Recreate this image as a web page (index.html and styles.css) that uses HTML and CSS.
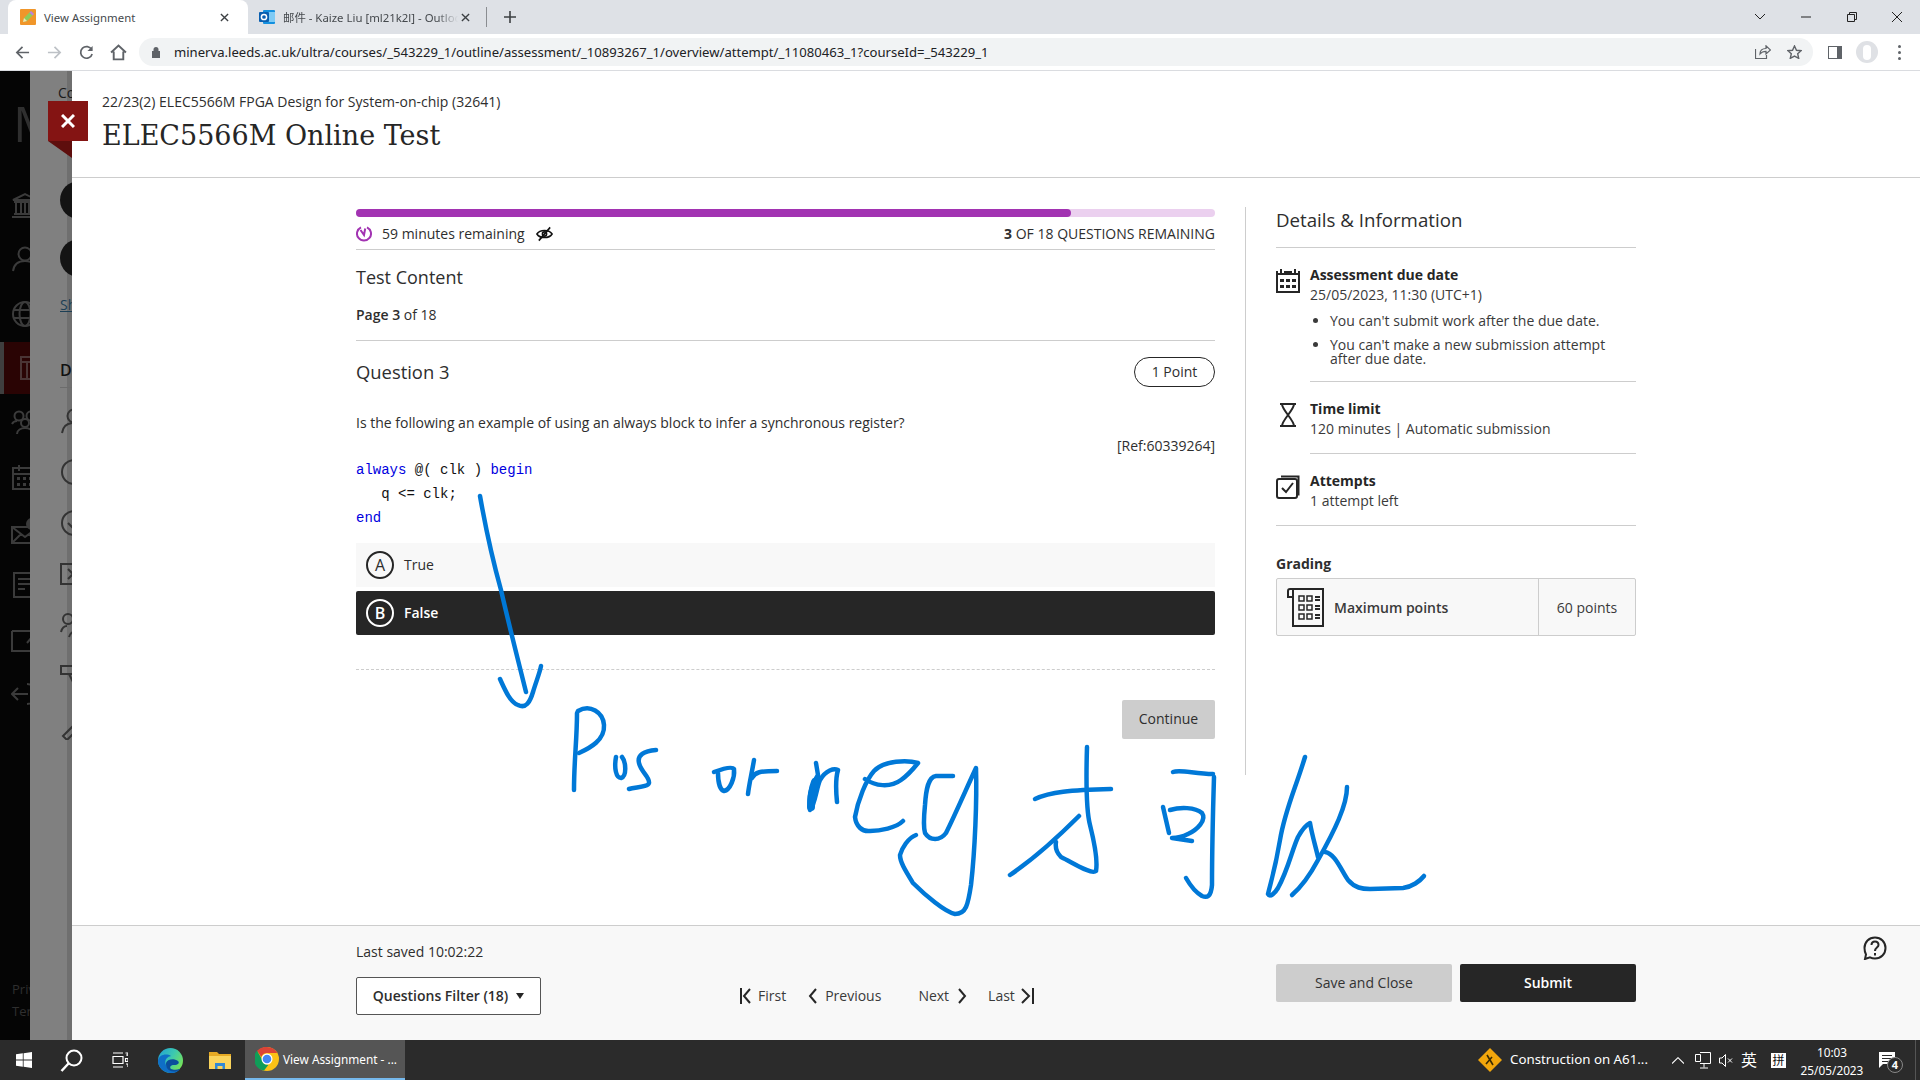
FILE: index.html
```html
<!DOCTYPE html>
<html lang="en">
<head>
<meta charset="utf-8">
<title>View Assignment</title>
<link rel="stylesheet" href="styles.css">
</head>
<body>
<header class="tabstrip">
  <div class="tab tab-active">
    <svg class="fav" viewBox="0 0 16 16"><rect width="16" height="16" rx="1" fill="#f0962a"/><path d="M3 13l1-4 7-7 3 3-7 7z" fill="#8ecb5a"/><path d="M11 2l3 3-1.500 1.500-3-3z" fill="#c07be0"/><path d="M3 13l1-4 3 3z" fill="#f7e3b0"/></svg>
    <span class="tab-title">View Assignment</span>
    <svg class="tab-x" viewBox="0 0 10 10"><path d="M1 1l8 8M9 1l-8 8"/></svg>
  </div>
  <div class="tab tab-other">
    <svg class="fav" viewBox="0 0 16 16"><rect x="4" y="1" width="12" height="14" rx="1" fill="#1490df"/><rect x="9" y="3" width="7" height="10" fill="#7fcbf5"/><rect y="3" width="10" height="10" rx="1" fill="#0a5fb0"/><circle cx="5" cy="8" r="2.600" fill="none" stroke="#fff" stroke-width="1.500"/></svg>
    <span class="tab-title tab-title-fade">邮件 - Kaize Liu [ml21k2l] - Outlook</span>
    <svg class="tab-x" viewBox="0 0 10 10"><path d="M1 1l8 8M9 1l-8 8"/></svg>
  </div>
  <span class="tab-sep"></span>
  <svg class="new-tab" viewBox="0 0 12 12"><path d="M6 0v12M0 6h12"/></svg>
  <div class="win-controls">
    <svg class="win-icon win-chev" viewBox="0 0 10 6"><path d="M0 0l5 5 5-5"/></svg>
    <svg class="win-icon win-min" viewBox="0 0 10 2"><path d="M0 1h10"/></svg>
    <svg class="win-icon win-max" viewBox="0 0 10 10"><path d="M.5 2.500h7v7h-7zM2.500 2.500v-2h7v7h-2"/></svg>
    <svg class="win-icon win-close" viewBox="0 0 10 10"><path d="M0 0l10 10M10 0l-10 10"/></svg>
  </div>
</header>

<nav class="toolbar">
  <svg class="tb-icon tb-back" viewBox="0 0 16 16"><path d="M15 8H2M8 2L2 8l6 6"/></svg>
  <svg class="tb-icon tb-fwd" viewBox="0 0 16 16"><path d="M1 8h13M8 2l6 6-6 6"/></svg>
  <svg class="tb-icon tb-reload" viewBox="0 0 16 16"><path d="M13.500 5A6.200 6.200 0 1 0 14 9.500"/><path class="tb-fill" d="M14.500 1v5.500H9z"/></svg>
  <svg class="tb-icon tb-home" viewBox="0 0 16 16"><path d="M1 8l7-6.500L15 8M3.500 7v7.500h9V7"/></svg>
  <div class="omnibox">
    <svg class="lock" viewBox="0 0 10 12"><path d="M2.500 5V3.500a2.500 2.500 0 0 1 5 0V5h1.500v7H1V5z" fill="#5f6368"/></svg>
    <span class="url">minerva.leeds.ac.uk/ultra/courses/_543229_1/outline/assessment/_10893267_1/overview/attempt/_11080463_1?courseId=_543229_1</span>
    <svg class="omni-icon omni-share" viewBox="0 0 16 14"><path d="M.5 4v9.500h11V10M5 9c0-4 3-5.500 6-5.500V.8L15.500 5 11 9V6.300C8.500 6.300 6.500 7 5 9z"/></svg>
    <svg class="omni-icon omni-star" viewBox="0 0 16 15"><path d="M8 1l2.100 4.600 5 .5-3.700 3.300 1.100 4.900L8 11.800l-4.500 2.500 1.100-4.900L.9 6.100l5-.5z"/></svg>
  </div>
  <span class="side-panel-btn"><span></span></span>
  <span class="avatar"><span></span></span>
  <span class="kebab"><i></i><i></i><i></i></span>
</nav>

<div class="app">
  <aside class="rail">
    <div class="rail-logo">M</div>
    <svg class="rail-icon" viewBox="0 0 28 26"><path d="M2 8l12-6 12 6zM3 10h22M5 11v10M10 11v10M14 11v10M18 11v10M23 11v10M3 22h22M1 25h26"/></svg>
    <svg class="rail-icon" viewBox="0 0 28 26"><circle cx="14" cy="8" r="6.500"/><path d="M2 25c1-7 6-10 12-10s11 3 12 10"/></svg>
    <svg class="rail-icon" viewBox="0 0 28 26"><circle cx="14" cy="13" r="12"/><ellipse cx="14" cy="13" rx="5.500" ry="12"/><path d="M2 9h24M2 17h24"/></svg>
    <div class="rail-active"><svg class="rail-icon" viewBox="0 0 28 26"><path d="M3 2h24v22H3zM3 7h24M9 7v17M13 11h9v7h-9z"/></svg></div>
    <svg class="rail-icon" viewBox="0 0 28 26"><circle cx="8" cy="7" r="4.500"/><circle cx="20" cy="7" r="4.500"/><circle cx="14" cy="14" r="4"/><path d="M1 15c1-2 3-3 5-3M27 15c-1-2-3-3-5-3M6 25c0-4 4-6 8-6s8 2 8 6"/></svg>
    <svg class="rail-icon" viewBox="0 0 28 26"><path d="M2 4h24v21H2zM2 10h24M8 1v6M20 1v6"/><path class="rail-dots" d="M6 13h3v3H6zM12 13h3v3h-3zM18 13h3v3h-3zM6 19h3v3H6zM12 19h3v3h-3zM18 19h3v3h-3z"/></svg>
    <svg class="rail-icon" viewBox="0 0 28 26"><path d="M1 9h26v16H1zM1 9l13 10L27 9M1 25l9-9M27 25l-9-9"/><circle class="rail-dots" cx="21" cy="6" r="6"/></svg>
    <svg class="rail-icon" viewBox="0 0 28 26"><path d="M3 1h20v24H3zM7 7h12M7 12h12M7 17h7"/></svg>
    <svg class="rail-icon" viewBox="0 0 28 26"><path d="M1 4h22M1 4v20h24V12M16 16l10-12"/></svg>
    <svg class="rail-icon" viewBox="0 0 28 26"><path d="M16 3a10 10 0 0 1 0 20M1 13h16M7 7l-6 6 6 6"/></svg>
    <div class="rail-legal"><span>Privacy</span><span>Terms</span></div>
  </aside>

  <div class="backdrop">
    <div class="bd-inner">
      <div class="bd-course">Course</div>
      <div class="bd-rule"></div>
      <div class="bd-avatar"></div>
      <div class="bd-avatar"></div>
      <div class="bd-link">Show</div>
      <div class="bd-head">Details</div>
      <div class="bd-rule2"></div>
      <svg class="bd-icon" viewBox="0 0 28 26"><circle cx="14" cy="8" r="6.500"/><path d="M2 25c1-7 6-10 12-10s11 3 12 10"/></svg>
      <svg class="bd-icon" viewBox="0 0 28 26"><circle cx="14" cy="13" r="12"/><path d="M14 11v8M14 6v2"/></svg>
      <svg class="bd-icon" viewBox="0 0 28 26"><circle cx="14" cy="13" r="12"/><path d="M8 13l5 5 7-8"/></svg>
      <svg class="bd-icon" viewBox="0 0 28 26"><path d="M1 3h26v20H1zM8 8l5 5-5 5M15 8l5 5-5 5"/></svg>
      <svg class="bd-icon" viewBox="0 0 28 26"><circle cx="8" cy="7" r="5"/><circle cx="18" cy="14" r="4"/><path d="M1 20c1-4 3-6 6-6M9 25c1-4 5-6 9-6"/></svg>
      <svg class="bd-icon" viewBox="0 0 28 26"><path d="M1 3h18v8H1zM9 11l6 12 4-12"/></svg>
      <svg class="bd-icon" viewBox="0 0 28 26"><path d="M3 22l18-18 4 4-18 18z"/></svg>
    </div>
  </div>

  <main class="panel">
    <section class="panel-head">
      <p class="crumb">22/23(2) ELEC5566M FPGA Design for System-on-chip (32641)</p>
      <h1 class="page-title">ELEC5566M Online Test</h1>
    </section>

    <section class="panel-body">
      <div class="col-main">
        <div class="progress"><div class="progress-fill"></div></div>
        <div class="timer-row">
          <svg class="timer-icon" viewBox="0 0 16 18"><path d="M5 2.800A7 7 0 1 0 11 2.800"/><path d="M4.500 5.500L8 10.500 9.200 4"/></svg>
          <span class="timer-text">59 minutes remaining</span>
          <svg class="eye-icon" viewBox="0 0 18 16"><path d="M1 8c3-5 13-5 16 0-3 5-13 5-16 0z"/><circle cx="9" cy="8" r="2.200"/><path d="M3 15L15 1"/></svg>
          <span class="remain"><b>3</b> OF 18 QUESTIONS REMAINING</span>
        </div>
        <h2 class="test-content">Test Content</h2>
        <p class="page-no"><b>Page 3</b> of 18</p>
        <div class="q-head">
          <h3 class="q-title">Question 3</h3>
          <span class="pill">1 Point</span>
        </div>
        <p class="q-text">Is the following an example of using an always block to infer a synchronous register?</p>
        <p class="q-ref">[Ref:60339264]</p>
        <pre class="code"><span class="kw">always</span> @( clk ) <span class="kw">begin</span>
   q &lt;= clk;
<span class="kw">end</span></pre>
        <div class="option"><span class="opt-badge">A</span><span>True</span></div>
        <div class="option option-on"><span class="opt-badge">B</span><span>False</span></div>
        <div class="dash"></div>
        <div class="continue-row"><span class="btn-continue">Continue</span></div>
      </div>

      <aside class="col-side">
        <h2 class="side-title">Details &amp; Information</h2>
        <div class="info">
          <svg class="info-icon" viewBox="0 0 24 24"><path d="M1 5h22v18H1zM1 5V2M5 5V0M19 5V0M23 5V2M8 3h8"/><path class="solid" d="M4 10h4v3H4zM10 10h4v3h-4zM16 10h4v3h-4zM4 16h4v3H4zM10 16h4v3h-4zM16 16h4v3h-4z"/></svg>
          <div class="info-text info-line info-first">
            <b>Assessment due date</b>
            <span>25/05/2023, 11:30 (UTC+1)</span>
            <ul class="notes">
              <li>You can't submit work after the due date.</li>
              <li>You can't make a new submission attempt after due date.</li>
            </ul>
          </div>
        </div>
        <div class="info">
          <svg class="info-icon" viewBox="0 0 24 24"><path d="M4 1h16M4 23h16M6 1c0 6 12 16 12 22M18 1C18 7 6 17 6 23"/></svg>
          <div class="info-text info-line">
            <b>Time limit</b>
            <span>120 minutes | Automatic submission</span>
          </div>
        </div>
        <div class="info info-line">
          <svg class="info-icon" viewBox="0 0 24 24"><path d="M5 1.500h17.500v19"/><rect x="1" y="4" width="20" height="19" rx="2"/><path d="M6 13l4 4 7-9"/></svg>
          <div class="info-text">
            <b>Attempts</b>
            <span>1 attempt left</span>
          </div>
        </div>
        <h4 class="grading">Grading</h4>
        <div class="grade-box">
          <svg class="grade-icon" viewBox="0 0 38 40"><path d="M6 39V2h30v37zM6 2H3a2 2 0 0 0-2 2v6h5"/><path class="solid-o" d="M12 9h5v5h-5zM20 9h5v5h-5zM12 18h5v5h-5zM20 18h5v5h-5zM12 27h5v5h-5zM20 27h5v5h-5z"/><path d="M28 10h5M28 13h5M28 19h5M28 22h5M28 28h5M28 31h5"/></svg>
          <span class="grade-label">Maximum points</span>
          <span class="grade-value">60 points</span>
        </div>
      </aside>
    </section>

    <footer class="panel-foot">
      <div class="foot-left">
        <p class="saved">Last saved 10:02:22</p>
        <span class="filter">Questions Filter (18) <i class="caret"></i></span>
      </div>
      <div class="pager">
        <svg class="pg-icon pg-first" viewBox="0 0 12 16"><path d="M1 0v16M10 1L4 8l6 7"/></svg><span class="pg-text pg-firsttext">First</span>
        <svg class="pg-icon pg-prev" viewBox="0 0 10 16"><path d="M8 1L2 8l6 7"/></svg><span class="pg-text">Previous</span>
        <span class="pg-text pg-next">Next</span><svg class="pg-icon pg-nexti" viewBox="0 0 10 16"><path d="M2 1l6 7-6 7"/></svg>
        <span class="pg-text pg-last">Last</span><svg class="pg-icon pg-lasti" viewBox="0 0 14 16"><path d="M2 1l7 7-7 7M13 0v16"/></svg>
      </div>
      <div class="foot-actions">
        <span class="btn btn-save">Save and Close</span>
        <span class="btn btn-submit">Submit</span>
      </div>
      <svg class="help" viewBox="0 0 24 24"><path d="M12 1.500c6 0 10.500 4.500 10.500 10.500S18 22.500 12 22.500c-2 0-3.500-.4-5-1.200L2 23l1-4.500C2 16.500 1.500 14 1.500 12 1.500 6 6 1.500 12 1.500z"/><path d="M8.500 9c0-2 1.500-3.500 3.500-3.500s3.500 1.500 3.500 3.500c0 2.500-3.500 2.800-3.500 6"/><path d="M12 17v2.500"/></svg>
    </footer>
  </main>
</div>

<footer class="taskbar">
  <svg class="tk-win" viewBox="0 0 16 16"><path d="M0 2.300l6.800-1v6.300H0zM7.600 1.200L16 0v7.600H7.600zM0 8.400h6.800v6.300l-6.800-1zM7.600 8.400H16V16l-8.400-1.200z" fill="#fff"/></svg>
  <svg class="tk-search" viewBox="0 0 23 23"><circle cx="14" cy="9" r="7.500" fill="none" stroke="#fff" stroke-width="2"/><path d="M8.500 14.500L1.500 22" stroke="#fff" stroke-width="2.500" fill="none"/></svg>
  <svg class="tk-view" viewBox="0 0 16 16"><path d="M1 1h10M1 15h10M1 4.500h10v7H1zM14 3h2v0M13.500 1h2.500v3M13.500 6.500h2.500v3h-2.500zM14 12h2v3" fill="none" stroke="#fff" stroke-width="1.200"/></svg>
  <svg class="tk-edge" viewBox="0 0 25 25"><defs><linearGradient id="eg" x1="0" y1="0" x2="1" y2=".6"><stop offset="0" stop-color="#1f9fd8"/><stop offset=".55" stop-color="#3cc8b0"/><stop offset="1" stop-color="#74e25c"/></linearGradient></defs><circle cx="12.500" cy="12.500" r="12.500" fill="url(#eg)"/><path d="M0 12.500C1 7 8 5 13 8c-5 1-7 5-5 9 2 4.500 8 7 14 4-4 5-10 5-14 3C3 22 0 18 0 12.500z" fill="#0f6fc6"/><path d="M8 15c1-4 8-5 12-2 2 2 0 4-4 4-3 0-5 2-3 4 2 1 6 1 9 0-4 4-11 3-13-1-1-2-1-3-1-5z" fill="#0b4f9c"/></svg>
  <svg class="tk-files" viewBox="0 0 22 18"><path d="M0 1h8l2 2h12v15H0z" fill="#e5a924"/><path d="M0 5h22v13H0z" fill="#f9d35c"/><path d="M6 12h10v6h-2.500v-3h-5v3H6z" fill="#2f88d5"/></svg>
  <div class="tk-app">
    <svg class="tk-chrome" viewBox="0 0 24 24"><circle cx="12" cy="12" r="12" fill="#fbc116"/><path d="M12 0a12 12 0 0 1 10.400 6H12a6 6 0 0 0-5.700 4L2 3.800A12 12 0 0 1 12 0z" fill="#db4437"/><path d="M2 3.800l4.800 8.300a6 6 0 0 0 6.700 5.700L9 23.600A12 12 0 0 1 2 3.800z" fill="#0f9d58"/><circle cx="12" cy="12" r="5.500" fill="#fff"/><circle cx="12" cy="12" r="4.300" fill="#4285f4"/></svg>
    <span class="tk-app-label">View Assignment - ...</span>
  </div>
  <div class="tray">
    <svg class="tray-sign" viewBox="0 0 24 24"><path d="M12 0l12 12-12 12L0 12z" fill="#f2a60c"/><path d="M9 7l6 10M14 9l-6 7" stroke="#3a2a00" stroke-width="1.600"/></svg>
    <span class="tray-news">Construction on A61...</span>
    <svg class="tray-chev" viewBox="0 0 12 7"><path d="M0 6.500L6 .7l6 5.800" fill="none" stroke="#fff" stroke-width="1.100"/></svg>
    <svg class="tray-net" viewBox="0 0 16 17"><path d="M5 .5h10.500v11H5M.5 2.500h5v7h-5zM9 11.500v4M5 16h8" fill="none" stroke="#fff" stroke-width="1"/></svg>
    <svg class="tray-vol" viewBox="0 0 14 13"><path d="M.5 4h2.500L6.500.5v12L3 9H.5zM9 4.500l4 4M13 4.500l-4 4" fill="none" stroke="#fff" stroke-width="1"/></svg>
    <span class="tray-ime">英</span>
    <span class="tray-pin">拼</span>
    <div class="clock"><span>10:03</span><span>25/05/2023</span></div>
    <div class="notify">
      <svg class="notify-ico" viewBox="0 0 16 16"><path d="M0 0h16v12H4l-4 4z" fill="#fff"/><path d="M3 3.500h10M3 6.500h10M3 9.500h6" stroke="#2b2b2b"/></svg>
      <span class="notify-badge">4</span>
    </div>
    <span class="show-desktop"></span>
  </div>
</footer>

<div class="close-ribbon">
  <svg class="close-x" viewBox="0 0 14 14"><path d="M1 1l12 12M13 1L1 13"/></svg>
</div>

<svg class="ink" viewBox="0 0 1920 1080">
  <path d="M480 496C486 530 494 565 501 590C509 625 518 660 526 692"/>
  <path d="M500 679C505 690 510 702 518 705C526 709 530 702 533 692C536 682 540 672 541 666"/>
  <path d="M574 790C574 760 577 740 577 713"/>
  <path d="M578 711C590 704 603 712 604 725C605 740 590 748 579 753"/>
  <path d="M616 757C614 768 616 778 621 778C627 776 626 762 622 757"/>
  <path d="M656 750C644 751 637 755 639 763C641 772 650 777 649 783C648 787 636 787 629 789"/>
  <path d="M714 772C722 769 732 766 734 769C735 778 730 790 724 791C720 790 718 782 718 773"/>
  <path d="M754 760C752 772 749 785 748 794"/>
  <path d="M752 778C755 772 760 771 777 771"/>
  <path d="M816 763L818 775C812 785 808 795 810 810C815 805 816 790 820 780C826 770 834 768 838 770C835 780 836 792 837 802"/>
  <path class="ink-thick" d="M815 782C812 790 811 800 811 807"/>
  <path d="M865 779C875 786 890 788 901 780C908 775 914 768 918 763C908 760 884 760 874 771C866 780 858 800 855 817C856 826 862 832 870 831C880 831 896 828 903 821"/>
  <path d="M953 776L936 776C928 777 926 790 925 805C924 815 923 826 925 833C930 841 940 841 946 833C955 815 968 785 976 768C977 800 975 850 971 885C968 905 966 914 955 914C945 912 925 895 913 883C905 870 900 862 900 855C902 848 908 838 916 835"/>
  <path d="M1035 799C1050 792 1070 790 1111 789"/>
  <path d="M1087 747C1086 780 1086 810 1090 825C1095 845 1098 860 1096 871C1092 875 1075 864 1061 857C1056 852 1055 848 1056 842"/>
  <path d="M1079 816C1060 835 1035 858 1010 875"/>
  <path d="M1173 772C1180 769 1195 774 1213 774"/>
  <path d="M1214 777C1213 810 1212 860 1212 885C1211 897 1207 898 1202 896C1195 892 1190 885 1186 878"/>
  <path d="M1163 807L1169 833"/>
  <path d="M1170 810C1180 807 1195 807 1202 813C1207 820 1197 830 1188 834C1182 837 1176 838 1172 838L1192 841"/>
  <path d="M1305 757C1295 790 1285 810 1280 840C1275 870 1270 885 1268 894C1270 898 1275 893 1278 888C1288 870 1292 850 1298 837C1303 828 1308 824 1310 823C1312 835 1316 848 1318 857"/>
  <path d="M1347 787C1347 805 1335 830 1318 860C1310 875 1300 888 1292 895"/>
  <path d="M1325 852C1335 853 1342 872 1348 880C1355 888 1362 889 1370 889L1403 888C1412 887 1420 881 1424 876"/>
</svg>
</body>
</html>
```
FILE: styles.css
```css
* { box-sizing: border-box; }
html, body { margin: 0; padding: 0; }
body {
  position: relative;
  width: 1920px;
  height: 1080px;
  overflow: hidden;
  display: flex;
  flex-direction: column;
  font-family: "Open Sans", "Noto Sans CJK SC", sans-serif;
  font-size: 14px;
  color: #2e2e2e;
  background: #fff;
}
p, h1, h2, h3, h4, ul, pre { margin: 0; padding: 0; font-weight: 400; }
svg { display: block; flex: none; }

/* browser chrome */
.tabstrip { height: 34px; flex: none; background: #dee1e6; display: flex; align-items: flex-end; padding-left: 8px; font-family: "Noto Sans", "Noto Sans CJK SC", sans-serif; }
.tab { height: 34px; display: flex; align-items: center; position: relative; font-size: 11.400px; color: #45494d; }
.tab-active { width: 240px; background: #fff; border-radius: 8px 8px 0 0; padding-left: 12px; }
.tab-other { width: 238px; padding-left: 11px; }
.fav { width: 16px; height: 16px; margin-right: 8px; }
.tab-title { white-space: nowrap; }
.tab-active .tab-title { width: 176px; }
.tab-title-fade { width: 175px; overflow: hidden; -webkit-mask-image: linear-gradient(90deg, #000 88%, transparent); mask-image: linear-gradient(90deg, #000 88%, transparent); }
.tab-x { width: 9px; height: 9px; fill: none; stroke: #3c4043; stroke-width: 1.500; }
.tab-other .tab-x { margin-left: 3px; }
.tab-sep { width: 1px; height: 20px; background: #8a8d91; align-self: center; }
.new-tab { width: 12px; height: 12px; margin: 0 0 11px 17px; fill: none; stroke: #3c4043; stroke-width: 1.600; }
.win-controls { margin-left: auto; height: 34px; display: flex; align-items: center; padding-right: 18px; }
.win-icon { fill: none; stroke: #222; stroke-width: 1; }
.win-chev { width: 10px; height: 6px; margin-right: 36px; }
.win-min { width: 10px; height: 2px; margin-right: 36px; }
.win-max { width: 10px; height: 10px; margin-right: 35px; }
.win-close { width: 10px; height: 10px; }

.toolbar { height: 37px; flex: none; background: #fff; border-bottom: 1px solid #dadce0; display: flex; align-items: center; padding: 0 0 0 15px; }
.tb-icon { width: 15px; height: 15px; fill: none; stroke: #5f6368; stroke-width: 1.800; }
.tb-fwd { margin-left: 17px; stroke: #bdc1c6; }
.tb-reload { margin-left: 17px; }
.tb-home { margin-left: 16px; width: 17px; height: 17px; }
.tb-fill { fill: #5f6368; stroke: none; }
.omnibox { width: 1674px; height: 28px; margin-left: 12px; border-radius: 14px; background: #f1f3f4; display: flex; align-items: center; padding-left: 12px; }
.lock { width: 10px; height: 12px; }
.url { margin-left: 13px; font-size: 13.100px; color: #202124; white-space: nowrap; font-family: "Noto Sans", sans-serif; }
.omni-icon { fill: none; stroke: #5f6368; stroke-width: 1.200; }
.omni-share { width: 16px; height: 14px; margin-left: auto; }
.omni-star { width: 15px; height: 14px; margin: 0 11px 0 16px; stroke-width: 1.500; }
.side-panel-btn { width: 14px; height: 13px; margin-left: 15px; background: #5f6368; padding: 1px 5px 1px 1px; display: block; flex: none; }
.side-panel-btn span { display: block; height: 100%; background: #fff; }
.avatar { width: 22px; height: 22px; margin-left: 14px; border-radius: 50%; background: #dfe1e5; display: flex; justify-content: center; align-items: center; flex: none; }
.avatar span { width: 8px; height: 15px; border-radius: 5px; background: #fff; }
.kebab { margin-left: 20px; display: flex; flex-direction: column; gap: 3px; }
.kebab i { width: 3px; height: 3px; border-radius: 50%; background: #5f6368; display: block; }

/* page behind the dialog */
.app { flex: 1; display: flex; min-height: 0; }
.rail { width: 30px; flex: none; background: #050505; overflow: hidden; display: flex; flex-direction: column; position: relative; }
.rail-logo { height: 107px; width: 60px; padding: 22px 0 0 13px; font-family: "Open Sans", sans-serif; font-size: 50px; line-height: 60px; color: #2f2f2f; }
.rail-icon { width: 28px; height: 26px; margin: 14px 0 14.400px 11px; fill: none; stroke: #3b3b3b; stroke-width: 2; }
.rail-dots { fill: #3b3b3b; stroke: none; }
.rail-active { height: 52px; background: #2a0404; border-left: 4px solid #3f3f3f; width: 30px; margin: 1px 0; overflow: hidden; }
.rail-active .rail-icon { margin: 13px 0 0 14px; stroke: #4a3535; }
.rail-legal { margin-top: auto; padding: 0 0 19px 12px; display: flex; flex-direction: column; gap: 2px; font-size: 13px; color: #2f2f2f; line-height: 20px; }

.backdrop { width: 42px; flex: none; background: linear-gradient(90deg, #808080 37px, #6f6f6f 37px); overflow: hidden; }
.bd-inner { width: 120px; padding: 12px 0 0 30px; display: flex; flex-direction: column; color: #111; }
.bd-course { height: 20px; margin-left: -2px; font-size: 14px; line-height: 20px; color: #1a1a1a; }
.bd-rule { height: 1px; margin: 14px 0 0 -10px; background: #6c6c6c; }
.bd-avatar { width: 38px; height: 38px; border-radius: 50%; background: #141414; flex: none; }
.bd-rule + .bd-avatar { margin-top: 63px; }
.bd-avatar + .bd-avatar { margin-top: 20px; }
.bd-link { margin-top: 18px; font-size: 14px; line-height: 20px; color: #1c3f55; text-decoration: underline; }
.bd-head { margin-top: 45px; font-size: 16px; font-weight: 600; line-height: 20px; color: #111; }
.bd-rule2 { height: 1px; margin: 7px 0 0; background: #6c6c6c; }
.bd-icon { width: 28px; height: 26px; margin-bottom: 25px; fill: none; stroke: #333; stroke-width: 2; }
.bd-rule2 + .bd-icon { margin-top: 20px; }

/* dialog panel */
.panel { flex: 1; min-width: 0; display: flex; flex-direction: column; background: #fff; }
.panel-head { height: 107px; flex: none; border-bottom: 1px solid #cdcdcd; padding: 21px 0 0 30px; }
.crumb { font-size: 14px; line-height: 20px; }
.page-title { margin-top: 5px; font-family: "DejaVu Serif", serif; font-size: 27px; line-height: 38px; color: #262626; }

.panel-body { flex: 1; min-height: 0; display: flex; align-items: flex-start; padding: 29px 0 0 284px; }
.col-main { width: 859px; padding-top: 2px; flex: none; }
.progress { height: 8px; border-radius: 4px; background: #ebd0ef; }
.progress-fill { width: 715px; height: 8px; border-radius: 4px; background: #a233b2; }
.timer-row { height: 33px; border-bottom: 1px solid #cdcdcd; display: flex; align-items: center; padding-top: 1px; }
.timer-icon { width: 16px; height: 19px; fill: none; stroke: #a233b2; stroke-width: 2; }
.timer-text { margin-left: 10px; }
.eye-icon { width: 17px; height: 16px; margin-left: 11px; fill: none; stroke: #111; stroke-width: 1.700; }
.remain { margin-left: auto; }
.remain b { font-weight: 700; }
.test-content { height: 54px; font-size: 18px; line-height: 54px; }
.page-no { line-height: 22px; padding-bottom: 14px; border-bottom: 1px solid #cdcdcd; height: 37px; }
.page-no b { font-weight: 600; }
.q-head { display: flex; justify-content: space-between; align-items: center; margin-top: 16px; height: 30px; }
.q-title { font-size: 18.400px; font-weight: 500; line-height: 30px; }
.pill { width: 81px; height: 30px; border: 1px solid #262626; border-radius: 15px; text-align: center; line-height: 28px; }
.q-text { margin-top: 26px; line-height: 20px; }
.q-ref { margin-top: 3px; line-height: 20px; text-align: right; }
.code { margin-top: 2px; font-family: "Liberation Mono", monospace; font-size: 14px; line-height: 24px; color: #111; }
.kw { color: #0000e0; }
.option { height: 44px; margin-top: 4px; display: flex; align-items: center; background: #f8f8f8; padding-left: 10px; gap: 10px; }
.code + .option { margin-top: 12.500px; }
.opt-badge { width: 28px; height: 28px; border: 2px solid #262626; border-radius: 50%; display: flex; align-items: center; justify-content: center; font-size: 16px; }
.option-on { background: #262626; color: #fff; font-weight: 600; border-radius: 2px; }
.option-on .opt-badge { border-color: #fff; }
.dash { margin-top: 34px; border-top: 1px dashed #cdcdcd; }
.continue-row { margin-top: 30px; display: flex; justify-content: flex-end; }
.btn-continue { width: 93px; height: 39px; padding-bottom: 1px; background: #cdcdcd; border-radius: 2px; display: flex; align-items: center; justify-content: center; }

.col-side { width: 391px; height: 568px; margin-left: 30px; flex: none; border-left: 1px solid #cdcdcd; padding-left: 30px; }
.side-title { height: 41px; border-bottom: 1px solid #cdcdcd; font-size: 18.700px; line-height: 26px; }
.info { display: flex; gap: 10px; }
.info-icon { width: 24px; height: 24px; margin-top: 21px; fill: none; stroke: #262626; stroke-width: 2; }
.solid { fill: #262626; stroke: none; }
.info-text { flex: 1; padding: 17px 0 14px; display: flex; flex-direction: column; line-height: 20px; color: #3a3a3a; }
.info-text b { font-weight: 700; color: #262626; }
.info-line { border-bottom: 1px solid #cdcdcd; }
.info-first { padding-bottom: 15px; }
.notes { list-style: disc; margin: 9px 0 0; padding-left: 20px; line-height: 14px; }
.notes li + li { margin-top: 10px; }
.grading { margin-top: 28px; line-height: 20px; font-weight: 700; font-size: 14px; }
.grade-box { margin-top: 4px; height: 58px; display: flex; align-items: center; border: 1px solid #cdcdcd; border-radius: 2px; background: #f8f8f8; color: #3a3a3a; }
.grade-icon { width: 38px; height: 40px; margin-left: 10px; fill: none; stroke: #262626; stroke-width: 2; }
.solid-o { stroke-width: 1.500; }
.grade-label { margin-left: 9px; width: 204px; font-weight: 600; }
.grade-value { flex: 1; align-self: stretch; border-left: 1px solid #cdcdcd; display: flex; align-items: center; justify-content: center; }

.panel-foot { height: 115px; flex: none; border-top: 1px solid #cdcdcd; background: #f8f8f8; display: flex; align-items: flex-start; padding-left: 284px; }
.foot-left { width: 185px; padding-top: 16px; flex: none; }
.saved { line-height: 20px; white-space: nowrap; }
.filter { margin-top: 15px; height: 38px; padding-bottom: 1px; background: #fff; border: 1px solid #555; border-radius: 2px; display: flex; align-items: center; justify-content: center; gap: 8px; font-weight: 600; white-space: nowrap; }
.caret { width: 0; height: 0; border: 4.500px solid transparent; border-top: 6px solid #262626; border-bottom: 0; }
.pager { margin: 60px 0 0 199px; width: 294px; height: 20px; display: flex; align-items: center; flex: none; color: #3a3a3a; }
.pg-icon { fill: none; stroke: #262626; stroke-width: 2; height: 16px; }
.pg-first { width: 12px; }
.pg-prev { width: 10px; margin-left: 22px; }
.pg-nexti { width: 10px; margin-left: 8px; }
.pg-lasti { width: 14px; margin-left: 5px; }
.pg-text { margin-left: 7px; line-height: 20px; }
.pg-firsttext { margin-left: 6px; }
.pg-next { margin-left: 37px; }
.pg-last { margin-left: 21px; }
.foot-actions { margin: 38px 0 0 242px; display: flex; gap: 8px; flex: none; }
.btn { width: 176px; height: 38px; padding-bottom: 1px; border-radius: 2px; display: flex; align-items: center; justify-content: center; }
.btn-save { background: #cdcdcd; color: #333; }
.btn-submit { background: #262626; color: #fff; font-weight: 600; }
.help { width: 24px; height: 24px; margin: 10px 0 0 227px; fill: none; stroke: #262626; stroke-width: 2; }

/* windows taskbar */
.taskbar { height: 40px; flex: none; background: #2b2b2b; display: flex; align-items: center; padding-left: 16px; color: #fff; font-family: "Noto Sans", "Noto Sans CJK SC", sans-serif; }
.tk-win { width: 16px; height: 16px; }
.tk-search { width: 23px; height: 23px; margin-left: 28px; }
.tk-view { width: 16px; height: 16px; margin-left: 29px; }
.tk-edge { width: 25px; height: 25px; margin-left: 30px; }
.tk-files { width: 22px; height: 18px; margin-left: 26px; }
.tk-app { width: 160px; height: 40px; margin-left: 14px; background: #555; border-bottom: 2px solid #76b9ed; display: flex; align-items: center; padding-left: 10px; gap: 4px; }
.tk-chrome { width: 24px; height: 24px; }
.tk-app-label { font-size: 11.800px; white-space: nowrap; }
.tray { margin-left: auto; display: flex; align-items: center; height: 40px; }
.tray-sign { width: 24px; height: 24px; }
.tray-news { margin-left: 8px; width: 162px; padding-bottom: 2px; font-size: 13.300px; white-space: nowrap; }
.tray-chev { width: 12px; height: 7px; }
.tray-net { width: 16px; height: 17px; margin-left: 11px; }
.tray-vol { width: 14px; height: 13px; margin-left: 8px; }
.tray-ime { margin-left: 8px; font-size: 16px; width: 17px; line-height: 20px; }
.tray-pin { margin-left: 13px; width: 15px; height: 15px; background: #fff; color: #111; font-size: 12px; line-height: 15px; text-align: center; }
.clock { width: 92px; padding-top: 1px; display: flex; flex-direction: column; align-items: center; font-size: 11.800px; line-height: 18px; }
.notify { position: relative; width: 16px; height: 16px; margin-left: 1px; }
.notify-ico { width: 16px; height: 16px; }
.notify-badge { position: absolute; left: 8px; top: 5px; width: 16px; height: 16px; border-radius: 50%; border: 1px solid #888; background: #2b2b2b; font-size: 11px; font-weight: 700; line-height: 14px; text-align: center; }
.show-desktop { width: 1px; height: 40px; margin-left: 20px; background: #555; }
.tray .show-desktop { margin-right: 4px; }

/* items that lie over the page */
.close-ribbon { position: absolute; left: 48px; top: 101px; width: 40px; height: 40px; background: #841413; display: flex; align-items: center; justify-content: center; }
.close-ribbon::after { content: ""; position: absolute; left: 0; top: 40px; border-top: 17px solid #5e0e0d; border-left: 24px solid transparent; }
.close-x { width: 14px; height: 14px; fill: none; stroke: #fff; stroke-width: 3; }
.ink { position: absolute; left: 0; top: 0; width: 1920px; height: 1080px; pointer-events: none; fill: none; stroke: #0078d7; stroke-width: 4.500; stroke-linecap: round; stroke-linejoin: round; }
.ink-thick { stroke-width: 8; }
```
